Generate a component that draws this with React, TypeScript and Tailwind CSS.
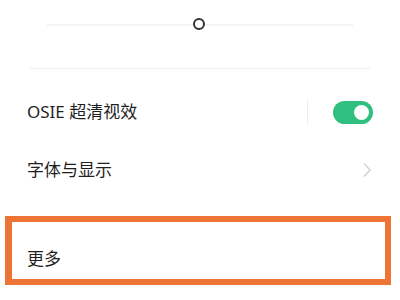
export default function App() {
  return (
    <div
      className="w-[400px] h-[300px] overflow-hidden bg-white text-[#1f1f1f]"
      style={{ fontFamily: '"Noto Sans", "Noto Sans CJK SC", sans-serif' }}
    >
      {/* slider */}
      <div className="relative h-[68px]">
        <div className="absolute left-[47px] right-[47px] top-[24px] h-[2px] bg-[#f3f3f3]" />
        <div className="absolute left-[193px] top-[18px] h-[12px] w-[12px] rounded-full border-[2px] border-[#333] bg-white" />
      </div>
      <div className="mx-[30px] h-px bg-[#eeeeee]" />

      <div className="mt-[14px] flex h-[58px] items-center pl-[27px] pr-[27px]">
        <span className="flex-1 text-[17px] leading-6">OSIE 超清视效</span>
        <div className="mr-[25px] h-[25px] w-px bg-[#ededed]" />
        <div className="flex h-[23px] w-[40px] items-center justify-end rounded-full bg-[#2fbf7e] pr-[4px]">
          <div className="h-[15px] w-[15px] rounded-full bg-white" />
        </div>
      </div>

      <div className="flex h-[58px] items-center pl-[27px] pr-[27px]">
        <span className="flex-1 text-[17px] leading-6">字体与显示</span>
        <svg width="10" height="16" viewBox="0 0 10 16" className="mr-[1px]">
          <polyline points="2,1.5 8,8 2,14.5" fill="none" stroke="#cfcfcf" strokeWidth="1.4" />
        </svg>
      </div>

      <div className="ml-[5px] mt-[17px] flex h-[69px] w-[386px] items-center border-[6px] border-l-[7px] border-[#ee7436] pl-[15px] pt-[17px]">
        <span className="text-[17px] leading-6">更多</span>
      </div>
    </div>
  )
}
